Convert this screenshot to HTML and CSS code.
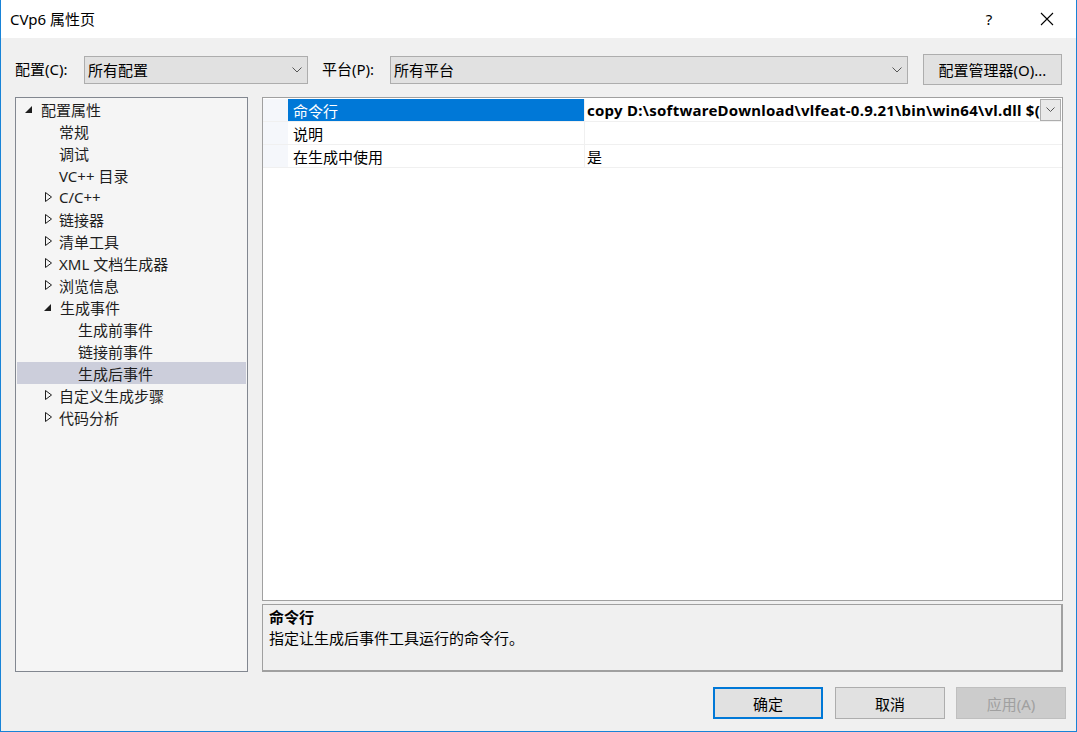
FILE: index.html
```html
<!DOCTYPE html>
<html lang="zh-CN">
<head>
<meta charset="utf-8">
<title>CVp6 属性页</title>
<link rel="stylesheet" href="styles.css">
</head>
<body>
<div class="window">
  <div class="titlebar">
    <span class="title">CVp6 属性页</span>
    <span class="tb-help">?</span>
    <span class="tb-close"><svg width="14" height="14" viewBox="0 0 14 14"><path d="M1 1 L13 13 M13 1 L1 13" stroke="#000" stroke-width="1.1" fill="none"/></svg></span>
  </div>
  <div class="body">
    <div class="toolbar">
      <span class="lbl lbl-config">配置(C):</span>
      <div class="combo combo-config"><span>所有配置</span><svg class="chev" width="10" height="6" viewBox="0 0 10 6"><path d="M0.5 0.5 L5 5 L9.5 0.5" stroke="#555" fill="none"/></svg></div>
      <span class="lbl lbl-plat">平台(P):</span>
      <div class="combo combo-plat"><span>所有平台</span><svg class="chev" width="10" height="6" viewBox="0 0 10 6"><path d="M0.5 0.5 L5 5 L9.5 0.5" stroke="#555" fill="none"/></svg></div>
      <button class="btn btn-mgr">配置管理器(O)...</button>
    </div>
    <div class="main">
      <div class="tree">
        <div class="row l0"><svg class="exp" width="8" height="8" viewBox="0 0 8 8"><path d="M7 0 L7 7 L0 7 Z" fill="#1e1e1e"/></svg>配置属性</div>
        <div class="row l1">常规</div>
        <div class="row l1">调试</div>
        <div class="row l1">VC++ 目录</div>
        <div class="row l1c"><svg class="col" width="7" height="10" viewBox="0 0 7 10"><path d="M0.5 0.5 L6.5 5 L0.5 9.5 Z" fill="none" stroke="#1e1e1e"/></svg>C/C++</div>
        <div class="row l1c"><svg class="col" width="7" height="10" viewBox="0 0 7 10"><path d="M0.5 0.5 L6.5 5 L0.5 9.5 Z" fill="none" stroke="#1e1e1e"/></svg>链接器</div>
        <div class="row l1c"><svg class="col" width="7" height="10" viewBox="0 0 7 10"><path d="M0.5 0.5 L6.5 5 L0.5 9.5 Z" fill="none" stroke="#1e1e1e"/></svg>清单工具</div>
        <div class="row l1c"><svg class="col" width="7" height="10" viewBox="0 0 7 10"><path d="M0.5 0.5 L6.5 5 L0.5 9.5 Z" fill="none" stroke="#1e1e1e"/></svg>XML 文档生成器</div>
        <div class="row l1c"><svg class="col" width="7" height="10" viewBox="0 0 7 10"><path d="M0.5 0.5 L6.5 5 L0.5 9.5 Z" fill="none" stroke="#1e1e1e"/></svg>浏览信息</div>
        <div class="row l1c"><svg class="exp" width="8" height="8" viewBox="0 0 8 8"><path d="M7 0 L7 7 L0 7 Z" fill="#1e1e1e"/></svg>生成事件</div>
        <div class="row l2">生成前事件</div>
        <div class="row l2">链接前事件</div>
        <div class="row l2 sel">生成后事件</div>
        <div class="row l1c"><svg class="col" width="7" height="10" viewBox="0 0 7 10"><path d="M0.5 0.5 L6.5 5 L0.5 9.5 Z" fill="none" stroke="#1e1e1e"/></svg>自定义生成步骤</div>
        <div class="row l1c"><svg class="col" width="7" height="10" viewBox="0 0 7 10"><path d="M0.5 0.5 L6.5 5 L0.5 9.5 Z" fill="none" stroke="#1e1e1e"/></svg>代码分析</div>
      </div>
      <div class="right">
        <div class="grid">
          <div class="prow">
            <div class="gutter"></div>
            <div class="pname psel">命令行</div>
            <div class="pval bold"><span class="vtext">copy D:\softwareDownload\vlfeat-0.9.21\bin\win64\vl.dll $(</span><span class="ddbtn"><svg width="9" height="5" viewBox="0 0 9 5"><path d="M0.5 0.5 L4.5 4.5 L8.5 0.5" stroke="#555" fill="none"/></svg></span></div>
          </div>
          <div class="prow">
            <div class="gutter"></div>
            <div class="pname">说明</div>
            <div class="pval"></div>
          </div>
          <div class="prow">
            <div class="gutter"></div>
            <div class="pname">在生成中使用</div>
            <div class="pval">是</div>
          </div>
          <div class="gfill"></div>
        </div>
        <div class="desc">
          <div class="dtitle">命令行</div>
          <div class="dtext">指定让生成后事件工具运行的命令行。</div>
        </div>
      </div>
    </div>
    <div class="footer">
      <button class="btn fbtn default">确定</button>
      <button class="btn fbtn">取消</button>
      <button class="btn fbtn disabled">应用(A)</button>
    </div>
  </div>
</div>
</body>
</html>
```

FILE: styles.css
```css
* { box-sizing: border-box; }
html, body { margin: 0; padding: 0; }
body {
  font-family: "Noto Sans", "Noto Sans CJK SC", sans-serif;
  font-size: 15px;
  color: #000;
  background: #f0f0f0;
}
.window {
  width: 1077px;
  height: 732px;
  display: flex;
  flex-direction: column;
  border-left: 1px solid #1883d7;
  border-right: 1px solid #1883d7;
  border-bottom: 1px solid #1883d7;
  background: #f0f0f0;
  overflow: hidden;
}
.titlebar {
  height: 38px;
  background: #fff;
  display: flex;
  align-items: center;
  flex: none;
}
.title {
  margin-left: 9px;
  font-size: 15px;
  flex: 1;
  padding-bottom: 1px;
}
.tb-help {
  width: 58px;
  text-align: center;
  font-size: 15px;
}
.tb-close {
  width: 58px;
  display: flex;
  justify-content: center;
  align-items: center;
}
.body {
  flex: 1;
  display: flex;
  flex-direction: column;
  padding: 0 13px 0 14px;
}
.toolbar {
  margin-top: 16px;
  height: 31px;
  display: flex;
  align-items: center;
  flex: none;
}
.lbl { white-space: nowrap; padding-bottom: 2px; }
.lbl-config { width: 69px; }
.lbl-plat { width: 68px; margin-left: 14px; }
.combo {
  height: 28px;
  background: #e1e1e1;
  border: 1px solid #adadad;
  display: flex;
  align-items: center;
  padding-left: 3px;
  padding-bottom: 1px;
}
.combo span { flex: 1; }
.combo .chev { margin-right: 5px; margin-top: 1px; }
.combo-config { width: 224px; }
.combo-plat { width: 518px; }
.btn {
  font-family: inherit;
  font-size: 15px;
  background: #e1e1e1;
  border: 1px solid #adadad;
  color: #000;
  padding: 0;
}
.btn-mgr { width: 139px; height: 31px; margin-left: 15px; }
.main {
  margin-top: 12px;
  height: 575px;
  display: flex;
  flex: none;
}
.tree {
  width: 233px;
  background: #f5f5f5;
  border: 1px solid #828790;
  padding: 0 1px;
}
.row {
  height: 22px;
  display: flex;
  align-items: center;
  white-space: nowrap;
  color: #1e1e1e;
}
.row .exp { margin-right: 9px; margin-top: 1px; }
.row .col { margin-right: 8px; }
.l0 { padding-left: 8px; }
.l0 .exp { margin-right: 8px; }
.l1 { padding-left: 42px; }
.l1c { padding-left: 28px; }
.l1c .exp { margin-left: -1px; margin-right: 8px; }
.l1c .col { margin-right: 7px; }
.l2 { padding-left: 61px; }
.sel { background: #cccedb; }
.right {
  margin-left: 14px;
  width: 801px;
  display: flex;
  flex-direction: column;
}
.grid {
  height: 504px;
  background: #fff;
  border: 1px solid #a0a0a0;
  padding-top: 1px;
  display: flex;
  flex-direction: column;
}
.prow {
  height: 23px;
  display: flex;
  border-bottom: 1px solid #f0f0f0;
}
.gutter {
  width: 25px;
  background: #f5f7fb;
  flex: none;
}
.pname {
  width: 297px;
  flex: none;
  padding-left: 5px;
  display: flex;
  align-items: center;
  border-right: 1px solid #f0f0f0;
  white-space: nowrap;
}
.psel { background: #0078d7; color: #fff; }
.pval {
  flex: 1;
  padding-left: 2px;
  display: flex;
  align-items: center;
  white-space: nowrap;
  overflow: hidden;
}
.bold { font-weight: bold; }
.vtext { flex: 1; overflow: hidden; letter-spacing: 0.25px; }
.ddbtn {
  width: 21px;
  height: 22px;
  flex: none;
  background: #e9e9e9;
  border: 1px solid #adadad;
  display: flex;
  align-items: center;
  justify-content: center;
  margin-right: 1px;
  margin-top: -1px;
}
.gfill { flex: 1; }
.desc {
  margin-top: 3px;
  height: 68px;
  border: 1px solid #a0a0a0;
  border-right-width: 2px;
  border-bottom-width: 2px;
  background: #f0f0f0;
  padding: 2px 6px;
}
.dtitle { font-weight: bold; height: 21px; line-height: 21px; }
.dtext { height: 21px; line-height: 21px; }
.footer {
  margin-top: 15px;
  display: flex;
  justify-content: flex-end;
  margin-right: -3px;
}
.fbtn { width: 110px; height: 32px; margin-left: 12px; }
.fbtn:nth-child(3) { margin-left: 11px; }
.default { border: 2px solid #0078d7; }
.disabled { background: #cccccc; border-color: #bfbfbf; color: #a0a0a0; }
```
